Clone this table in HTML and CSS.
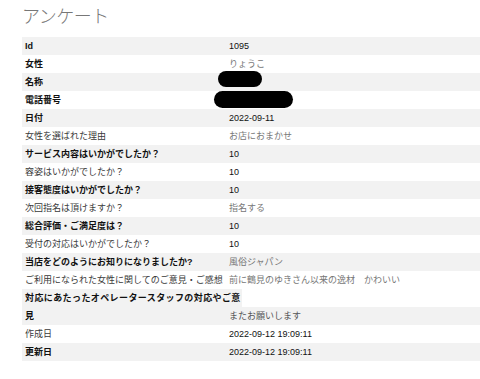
FILE: index.html
```html
<!DOCTYPE html>
<html lang="ja">
<head>
<meta charset="utf-8">
<title>アンケート</title>
<link rel="stylesheet" href="styles.css">
</head>
<body>
<div class="page">
  <h1 class="title">アンケート</h1>
  <div class="list">
    <div class="row alt"><div class="k b">Id</div><div class="v num">1095</div></div>
    <div class="row"><div class="k b">女性</div><div class="v jp">りょうこ</div></div>
    <div class="row alt"><div class="k b">名称</div><div class="v"><span class="redact r1"></span></div></div>
    <div class="row"><div class="k b">電話番号</div><div class="v"><span class="redact r2"></span></div></div>
    <div class="row alt"><div class="k b">日付</div><div class="v num">2022-09-11</div></div>
    <div class="row"><div class="k">女性を選ばれた理由</div><div class="v jp">お店におまかせ</div></div>
    <div class="row alt"><div class="k b">サービス内容はいかがでしたか？</div><div class="v num">10</div></div>
    <div class="row"><div class="k">容姿はいかがでしたか？</div><div class="v num">10</div></div>
    <div class="row alt"><div class="k b">接客態度はいかがでしたか？</div><div class="v num">10</div></div>
    <div class="row"><div class="k">次回指名は頂けますか？</div><div class="v jp">指名する</div></div>
    <div class="row alt"><div class="k b">総合評価・ご満足度は？</div><div class="v num">10</div></div>
    <div class="row"><div class="k">受付の対応はいかがでしたか？</div><div class="v num">10</div></div>
    <div class="row alt"><div class="k b">当店をどのようにお知りになりましたか?</div><div class="v jp">風俗ジャパン</div></div>
    <div class="row"><div class="k">ご利用になられた女性に関してのご意見・ご感想</div><div class="v jp">前に鶴見のゆきさん以来の逸材　かわいい</div></div>
    <div class="wrapline"><span class="k b longk">対応にあたったオペレータースタッフの対応やご意</span></div>
    <div class="row alt"><div class="k b">見</div><div class="v jp dark">またお願いします</div></div>
    <div class="row"><div class="k">作成日</div><div class="v num">2022-09-12 19:09:11</div></div>
    <div class="row alt"><div class="k b">更新日</div><div class="v num">2022-09-12 19:09:11</div></div>
  </div>
</div>
</body>
</html>
```
FILE: styles.css
```css
html, body {
  margin: 0;
  padding: 0;
  background: #ffffff;
}
body {
  font-family: "Liberation Sans", "Noto Sans CJK JP", sans-serif;
  font-size: 9px;
  color: #222;
}
.page {
  padding-left: 22px;
}
.title {
  margin: 0 0 13px 0;
  padding-top: 6px;
  font-family: "Noto Sans CJK JP", sans-serif;
  font-weight: 300;
  font-size: 18px;
  line-height: 18px;
  color: #777;
  letter-spacing: -0.5px;
}
.list {
  display: flex;
  flex-direction: column;
}
.row {
  display: grid;
  grid-template-columns: 207px 1fr;
  height: 18px;
  line-height: 18px;
  background: #ffffff;
}
.row.alt {
  background: #f2f2f2;
}
.k {
  padding-left: 3px;
  color: #3a3a3a;
  white-space: nowrap;
}
.k.b {
  font-weight: bold;
  color: #111;
}
.v {
  position: relative;
  white-space: nowrap;
}
.num {
  color: #111;
}
.jp {
  color: #777;
}
.jp.dark {
  color: #555;
}
.wrapline {
  height: 18px;
  line-height: 18px;
}
.longk {
  display: inline-block;
  background: #f2f2f2;
  padding-right: 1px;
  letter-spacing: 0.4px;
}
.redact {
  position: absolute;
  background: #000;
  border-radius: 9px;
}
.r1 {
  left: -11px;
  top: -2px;
  width: 44px;
  height: 16px;
}
.r2 {
  left: -15px;
  top: 0px;
  width: 79px;
  height: 17px;
}
```
